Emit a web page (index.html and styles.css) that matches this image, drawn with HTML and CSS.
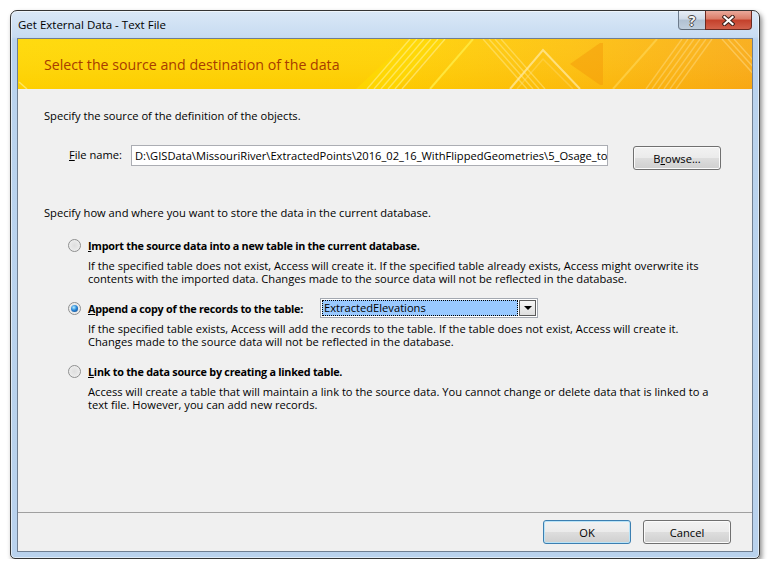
FILE: index.html
```html
<!DOCTYPE html>
<html lang="en">
<head>
    <meta charset="UTF-8">
    <meta name="viewport" content="width=device-width, initial-scale=1.0">
    <title>Get External Data - Text File</title>
    <link rel="stylesheet" href="styles.css">
</head>
<body>
    <div class="window">
        <div class="titlebar">
            <span class="title">Get External Data - Text File</span>
            <div class="caption-buttons">
                <span class="cap-btn help">?</span>
                <span class="cap-btn close">
                    <svg width="13" height="11" viewBox="0 0 13 11">
                        <path d="M2.5 2 L10.5 9 M10.5 2 L2.5 9" stroke="#3a201b" stroke-width="4.2" stroke-linecap="square" fill="none"/>
                        <path d="M2.5 2 L10.5 9 M10.5 2 L2.5 9" stroke="#ffffff" stroke-width="2.2" stroke-linecap="square" fill="none"/>
                    </svg>
                </span>
            </div>
        </div>

        <div class="client">
            <div class="banner">
                <svg class="banner-art" width="734" height="50" viewBox="0 0 734 50">
                    <defs>
                        <linearGradient id="bannerBg" x1="0" y1="0" x2="1" y2="0">
                            <stop offset="0" stop-color="#ffd800"/>
                            <stop offset="0.5" stop-color="#ffd300"/>
                            <stop offset="0.75" stop-color="#fdc10c"/>
                            <stop offset="1" stop-color="#f9ab15"/>
                        </linearGradient>
                        <linearGradient id="bannerShade" x1="0" y1="0" x2="0" y2="1">
                            <stop offset="0" stop-color="#ffffff" stop-opacity="0.06"/>
                            <stop offset="1" stop-color="#f08a00" stop-opacity="0.12"/>
                        </linearGradient>
                    </defs>
                    <rect width="734" height="50" fill="url(#bannerBg)"/>
                    <rect width="734" height="50" fill="url(#bannerShade)"/>
                    <line x1="1" y1="43" x2="9" y2="50" stroke="#fff4a0" stroke-opacity="0.6" stroke-width="1.5"/>
                    <polygon points="338,50 392,0 428,0 378,50" fill="#ffe100" fill-opacity="0.45"/>
                    <g stroke="#fff6b0" stroke-opacity="0.5" stroke-width="1.4">
                        <line x1="349" y1="50" x2="392" y2="0"/>
                        <line x1="356" y1="50" x2="399" y2="0"/>
                        <line x1="363" y1="50" x2="406" y2="0"/>
                        <line x1="370" y1="50" x2="413" y2="0"/>
                        <line x1="377" y1="50" x2="420" y2="0"/>
                        <line x1="384" y1="50" x2="427" y2="0"/>
                    </g>
                    <line x1="412" y1="50" x2="455" y2="0" stroke="#ffe63c" stroke-width="2"/>
                    <g stroke="#fff3b0" stroke-opacity="0.4" stroke-width="1.4">
                        <line x1="465" y1="0" x2="509" y2="50"/>
                        <line x1="471" y1="0" x2="515" y2="50"/>
                        <line x1="477" y1="0" x2="521" y2="50"/>
                        <line x1="483" y1="0" x2="527" y2="50"/>
                    </g>
                    <polyline points="492,50 525,11 562,50" fill="none" stroke="#ffe9a0" stroke-opacity="0.75" stroke-width="2"/>
                    <polyline points="499,50 525,20 555,50" fill="none" stroke="#ffe080" stroke-opacity="0.35" stroke-width="1.5"/>
                    <polygon points="552,25 582,4 585,4 585,46 582,46" fill="#f49a0a" fill-opacity="0.5"/>
                    <line x1="595" y1="50" x2="639" y2="0" stroke="#ffd85a" stroke-opacity="0.6" stroke-width="2"/>
                    <g stroke="#ffe39a" stroke-opacity="0.4" stroke-width="1.4">
                        <line x1="628" y1="50" x2="664" y2="0"/>
                        <line x1="634" y1="50" x2="670" y2="0"/>
                        <line x1="640" y1="50" x2="676" y2="0"/>
                        <line x1="646" y1="50" x2="682" y2="0"/>
                        <line x1="652" y1="50" x2="688" y2="0"/>
                        <line x1="658" y1="50" x2="694" y2="0"/>
                    </g>
                    <g stroke="#ffe39a" stroke-opacity="0.45" stroke-width="1.4">
                        <line x1="704" y1="0" x2="740" y2="40"/>
                        <line x1="710" y1="0" x2="746" y2="40"/>
                        <line x1="716" y1="0" x2="752" y2="40"/>
                    </g>
                </svg>
                <h1>Select the source and destination of the data</h1>
            </div>

            <div class="content">
                <p class="intro">Specify the source of the definition of the objects.</p>

                <div class="file-row">
                    <label for="fileName"><u>F</u>ile name:</label>
                    <div class="text-input" id="fileName">D:\GISData\MissouriRiver\ExtractedPoints\2016_02_16_WithFlippedGeometries\5_Osage_to_Missouri.txt</div>
                    <button class="btn browse">B<u>r</u>owse...</button>
                </div>

                <p class="intro second">Specify how and where you want to store the data in the current database.</p>

                <div class="option first">
                    <div class="option-head">
                        <span class="radio"></span>
                        <span class="option-label"><u>I</u>mport the source data into a new table in the current database.</span>
                    </div>
                    <p class="option-desc">If the specified table does not exist, Access will create it. If the specified table already exists, Access might overwrite its<br>contents with the imported data. Changes made to the source data will not be reflected in the database.</p>
                </div>

                <div class="option">
                    <div class="option-head">
                        <span class="radio checked"></span>
                        <span class="option-label append-label"><u>A</u>ppend a copy of the records to the table:</span>
                        <div class="combo">
                            <span class="combo-value">ExtractedElevations</span>
                            <span class="combo-arrow"><span class="triangle"></span></span>
                        </div>
                    </div>
                    <p class="option-desc">If the specified table exists, Access will add the records to the table. If the table does not exist, Access will create it.<br>Changes made to the source data will not be reflected in the database.</p>
                </div>

                <div class="option">
                    <div class="option-head">
                        <span class="radio"></span>
                        <span class="option-label"><u>L</u>ink to the data source by creating a linked table.</span>
                    </div>
                    <p class="option-desc">Access will create a table that will maintain a link to the source data. You cannot change or delete data that is linked to a<br>text file. However, you can add new records.</p>
                </div>
            </div>

            <div class="footer">
                <button class="btn ok">OK</button>
                <button class="btn">Cancel</button>
            </div>
        </div>
    </div>
</body>
</html>
```

FILE: styles.css
```css
body {
    margin: 0;
    background: #ffffff;
    font-family: "Open Sans", "Noto Sans", sans-serif;
    font-size: 11.15px;
    color: #000000;
}
.window {
    margin: 10px 0 0 10px;
    width: 750px;
    height: 549px;
    box-sizing: border-box;
    border: 1px solid #343434;
    border-radius: 7px 7px 5px 5px;
    background: linear-gradient(#dae8f7 0, #c7dbf1 26px, #bad3ee 28px, #b9d2ed 100%);
    box-shadow: 2px 3px 5px rgba(0, 0, 0, 0.45), inset 0 0 0 1px rgba(255, 255, 255, 0.55);
    display: flex;
    flex-direction: column;
}
.titlebar {
    height: 27px;
    flex-shrink: 0;
    display: flex;
    align-items: flex-start;
    padding: 0 7px;
}
.title {
    padding-top: 6px;
    line-height: 16px;
    font-size: 11.5px;
}
.caption-buttons {
    margin-left: auto;
    display: flex;
}
.cap-btn {
    height: 19px;
    box-sizing: border-box;
    display: flex;
    align-items: center;
    justify-content: center;
    border-bottom: 1px solid #5e6a78;
}
.help {
    width: 27px;
    border-left: 1px solid #6d7b8c;
    border-radius: 0 0 0 4px;
    background: linear-gradient(#e8eef6, #cfdae7 45%, #b1c1d2 50%, #bfcedd);
    color: #f6f6f6;
    font-weight: bold;
    font-size: 14px;
    text-shadow: -1px 0 #4a4a4a, 1px 0 #4a4a4a, 0 -1px #4a4a4a, 0 1px #4a4a4a;
}
.close {
    width: 47px;
    border-left: 1px solid #6b2a20;
    border-right: 1px solid #6b2a20;
    border-bottom-color: #6b2a20;
    border-radius: 0 0 4px 0;
    background: linear-gradient(#eaa99b, #d97b67 45%, #c4402b 50%, #d2614b);
}
.client {
    margin: 0 6px 6px;
    flex: 1;
    display: flex;
    flex-direction: column;
    border: 1px solid #6f7e91;
    background: #f0f0f0;
}
.banner {
    position: relative;
    height: 50px;
    flex-shrink: 0;
    display: flex;
    align-items: center;
    padding-left: 26px;
    overflow: hidden;
}
.banner-art {
    position: absolute;
    left: 0;
    top: 0;
}
.banner h1 {
    position: relative;
    margin: 0;
    font-weight: normal;
    font-size: 14.2px;
    color: #a83c00;
}
.content {
    flex: 1;
    padding: 19px 0 0 26px;
}
.intro {
    margin: 0;
    line-height: 16px;
}
.intro.second {
    margin-top: 35px;
}
.file-row {
    display: flex;
    align-items: flex-start;
    margin: 21px 0 0 25px;
}
.file-row label {
    width: 62px;
    line-height: 20px;
}
.text-input {
    width: 477px;
    height: 21px;
    box-sizing: border-box;
    border: 1px solid #abadb3;
    background: #ffffff;
    padding-left: 3px;
    line-height: 19px;
    white-space: nowrap;
    overflow: hidden;
}
.btn {
    width: 88px;
    height: 24px;
    box-sizing: border-box;
    padding: 0;
    border: 1px solid #707070;
    border-radius: 3px;
    background: linear-gradient(#f2f2f2, #ebebeb 48%, #dddddd 52%, #cfcfcf);
    box-shadow: inset 0 0 0 1px #fbfbfb;
    font: inherit;
    color: #000000;
}
.browse {
    margin: 1px 0 0 25px;
}
.ok {
    border-color: #3c7fb1;
    box-shadow: inset 0 0 0 1px #b9e3f7;
}
.option {
    margin-top: 13px;
}
.option.first {
    margin-top: 14px;
}
.option-head {
    display: flex;
    align-items: center;
    height: 20px;
    padding-left: 24px;
}
.radio {
    position: relative;
    flex-shrink: 0;
    width: 13px;
    height: 13px;
    box-sizing: border-box;
    margin-right: 7px;
    border: 1px solid #8e8f8f;
    border-radius: 50%;
    background: radial-gradient(circle at 50% 50%, #dedede 0, #e9e9e9 55%, #f8f8f8 100%);
}
.radio.checked::after {
    content: "";
    position: absolute;
    left: 2px;
    top: 2px;
    width: 7px;
    height: 7px;
    border-radius: 50%;
    background: radial-gradient(circle at 40% 35%, #b8f0ff 0, #2a88da 45%, #0b3b78 100%);
}
.option-label {
    font-weight: bold;
    font-size: 10.8px;
    letter-spacing: -0.25px;
    white-space: nowrap;
}
.append-label {
    width: 232px;
    flex-shrink: 0;
}
.combo {
    display: flex;
    width: 218px;
    height: 20px;
    box-sizing: border-box;
    padding: 1px;
    border: 1px solid #a3a8b0;
    background: #ffffff;
}
.combo-value {
    flex: 1;
    padding-left: 2px;
    background: #99c9ff;
    outline: 1px dotted #000000;
    outline-offset: -1px;
    line-height: 16px;
}
.combo-arrow {
    width: 17px;
    box-sizing: border-box;
    margin-left: 1px;
    display: flex;
    align-items: center;
    justify-content: center;
    border: 1px solid #5a5a5a;
    background: linear-gradient(#f6f6f6, #dedede);
}
.triangle {
    width: 0;
    height: 0;
    border-left: 4px solid transparent;
    border-right: 4px solid transparent;
    border-top: 4px solid #000000;
}
.option-desc {
    margin: 4px 0 0 44px;
    line-height: 13px;
    white-space: nowrap;
}
.footer {
    flex-shrink: 0;
    height: 39px;
    box-sizing: border-box;
    display: flex;
    justify-content: flex-end;
    gap: 12px;
    padding: 7px 21px 0 0;
    border-top: 1px solid #a0a0a0;
}
```
